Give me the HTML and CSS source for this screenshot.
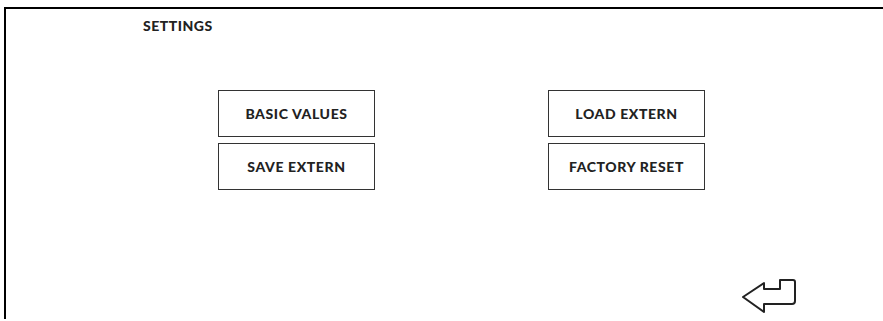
FILE: index.html
```html
<!DOCTYPE html>
<html lang="en">
<head>
  <meta charset="UTF-8" />
  <title>Settings</title>
  <link rel="stylesheet" href="styles.css">
</head>
<body>
  <div class="frame">
    <h1 class="title">SETTINGS</h1>
    <div class="actions">
      <div class="column">
        <button class="btn">BASIC VALUES</button>
        <button class="btn">SAVE EXTERN</button>
      </div>
      <div class="column">
        <button class="btn">LOAD EXTERN</button>
        <button class="btn">FACTORY RESET</button>
      </div>
    </div>
    <div class="footer">
      <button class="back" aria-label="Back">
        <svg width="60" height="40" viewBox="0 0 60 40">
          <path d="M2 20 L23 6 L23 12 L39 12 L39 3 L52 3 Q54 3 54 5 L54 24 Q54 27 51 27 L23 27 L23 35 Z"
                fill="none" stroke="#222" stroke-width="2" stroke-linejoin="round" />
        </svg>
      </button>
    </div>
  </div>
</body>
</html>
```

FILE: styles.css
```css
body {
  margin: 0;
  font-family: 'Lato', 'Liberation Sans', sans-serif;
  color: #222;
  background: #fff;
  height: 321px;
  overflow: hidden;
}

.frame {
  margin: 7px 0 0 4px;
  border-top: 2px solid #000;
  border-left: 2px solid #000;
  height: 312px;
  box-sizing: border-box;
  display: flex;
  flex-direction: column;
}

.title {
  margin: 9px 0 0 137px;
  font-size: 14px;
  font-weight: 900;
  line-height: 16px;
  letter-spacing: 0.5px;
}

.actions {
  display: flex;
  gap: 173px;
  margin: 56px 0 0 212px;
}

.column {
  display: flex;
  flex-direction: column;
  gap: 6px;
}

.btn {
  width: 157px;
  height: 47px;
  border: 1px solid #333;
  background: #fff;
  color: #222;
  font-family: inherit;
  font-size: 14px;
  font-weight: 900;
  letter-spacing: 0.6px;
  padding: 0;
  cursor: pointer;
}

.footer {
  display: flex;
  justify-content: flex-end;
  margin-top: auto;
  padding: 0 82px 2px 0;
}

.back {
  border: none;
  background: none;
  padding: 0;
  cursor: pointer;
}

.back svg {
  display: block;
}
```
